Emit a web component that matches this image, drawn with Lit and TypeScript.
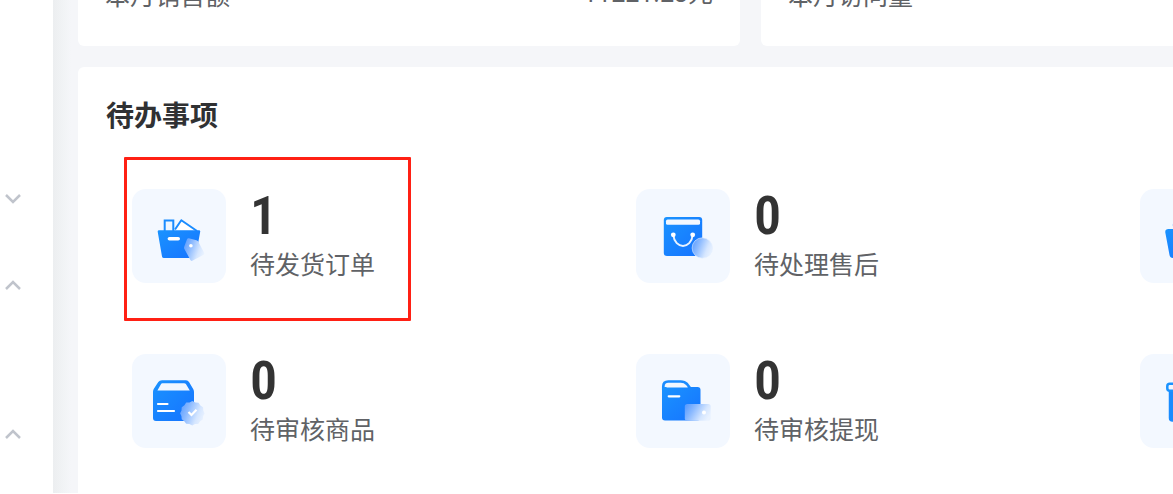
import { LitElement, html, css, svg, nothing } from "lit";
import { customElement, property } from "lit/decorators.js";

const gradients = svg`
  <defs>
    <linearGradient id="blue" x1="0" y1="0" x2="1" y2="1">
      <stop offset="0" stop-color="#1a93ff" />
      <stop offset="1" stop-color="#1673ff" />
    </linearGradient>
    <linearGradient id="glass" x1="0" y1="0.2" x2="1" y2="0.6">
      <stop offset="0" stop-color="#5c9dff" />
      <stop offset="0.35" stop-color="#8fbcff" />
      <stop offset="0.75" stop-color="#d5e6ff" />
      <stop offset="1" stop-color="#e9f2ff" />
    </linearGradient>
  </defs>`;

const icons = {
  basket: svg`
    <path d="M32.7 43V31.6h8.6V43" fill="#eef6ff" stroke="#1a8cff" stroke-width="2" />
    <path d="M43 40.5l6.3-9.3L65 42" fill="#fff" stroke="#1a8cff" stroke-width="2" stroke-linejoin="round" />
    <path d="M27 41.3h40q1.5 0 1.2 1.5l-4.5 24.4q-.4 1.8-2 1.8H32q-1.7 0-2-1.6L25.7 42.8q-.2-1.5 1.3-1.5z" fill="url(#blue)" />
    <rect x="35.6" y="48" width="12.4" height="3.6" rx="1.8" fill="#fff" />
    <path d="M56.8 49.2l7.6 2q1.2.4 1.8 1.4l5.8 11q.8 1.6-.8 2.4l-10.4 5.6q-1.6.8-2.4-.6l-6-11q-.6-1 -.2-2.2l2.8-7.6q.5-1.2 1.8-1z" fill="url(#glass)" />
    <circle cx="58.9" cy="56.7" r="1.8" fill="#fff" />`,
  bag: svg`
    <rect x="27.8" y="28" width="38.4" height="39" rx="3" fill="url(#blue)" />
    <rect x="30" y="30.6" width="34" height="5.2" rx="1.6" fill="#f3f8ff" />
    <path d="M37.3 46c1.5 14.5 17.9 14.5 19.4 0" fill="none" stroke="#e8f2ff" stroke-width="2" />
    <circle cx="37.3" cy="45.8" r="2.4" fill="#fff" />
    <circle cx="56.7" cy="45.8" r="2.4" fill="#fff" />
    <circle cx="66.3" cy="59" r="10.2" fill="url(#glass)" stroke="#e3efff" stroke-width="0.6" />`,
  box: svg`
    <path d="M30 26.3h24q2 0 3 1.8l4.2 7q.8 1.4.8 3V64q0 3-3 3H24q-3 0-3-3V38q0-1.5.7-3l4.6-6.9q1.2-1.8 3.7-1.8z" fill="url(#blue)" />
    <path d="M30.4 29.3H52q1.5 0 2.2 1.3l3.6 6H25.4l3.4-6q.6-1.3 1.6-1.3z" fill="#f1f7ff" />
    <path d="M26 50h9.5M26 57h16" stroke="#fff" stroke-width="2.2" stroke-linecap="round" />
    <path d="M60.3 47l3 1.5 3.3.2 1.8 2.7 2.7 1.9.2 3.2 1.3 2.9-1.5 2.9-.3 3.2-2.7 1.8-1.9 2.6-3.2.2-2.7 1.4-2.9-1.4-3.2-.3-1.9-2.6-2.6-1.9-.3-3.2-1.3-2.8 1.4-2.9.2-3.2 2.7-1.9 1.8-2.7 3.3-.2z" fill="url(#glass)" />
    <path d="M56.5 58l3 3 5-5.2" fill="none" stroke="#fff" stroke-width="2.2" />`,
  wallet: svg`
    <path d="M27.3 36v-3.5q0-5 5-5h12.4q4 0 6.3 2.5l3 4" fill="#f1f7ff" stroke="#1a8cff" stroke-width="2.7" />
    <path d="M29 33h32.5q3 0 3 3v27.5q0 3-3 3H29q-3 0-3-3V36q0-3 3-3z" fill="url(#blue)" />
    <path d="M30.5 33.6q0-2.6 2.6-2.6h15.5l3.4 2.6z" fill="#f1f7ff" />
    <path d="M32.7 42.3h10.6" stroke="#fff" stroke-width="2.2" stroke-linecap="round" />
    <rect x="48.8" y="50" width="25.9" height="16.7" rx="2.5" fill="url(#glass)" />
    <circle cx="68" cy="58.5" r="2" fill="#fff" />`,
  refund: svg`
    <circle cx="34" cy="36" r="1.5" fill="#a5cdff" />
    <path d="M28.5 40h37q3.5 0 3 3.5l-4 22.5q-.5 3-3.5 3H33q-3 0-3.5-3l-4.2-22.5q-.4-3.5 3.2-3.5z" fill="url(#blue)" />`,
  store: svg`
    <path d="M30 37v27q0 2.5 2.5 2.5h30q2.5 0 2.5-2.5V37" fill="#1a8cff" stroke="#1a8cff" stroke-width="2.5" />
    <rect x="27.3" y="29.7" width="40" height="7" rx="2.5" fill="#f1f7ff" stroke="#1a93ff" stroke-width="2.5" />`,
};

type IconName = keyof typeof icons;

@customElement("todo-item")
class TodoItem extends LitElement {
  @property() icon: IconName = "basket";
  @property() label = "";
  @property() count = "";
  @property({ type: Boolean }) marked = false;

  static styles = css`
    :host {
      display: flex;
      gap: 24px;
      position: relative;
    }
    .tile {
      flex: none;
      width: 94px;
      height: 94px;
      border-radius: 14px;
      background: #f3f8ff;
    }
    .tile svg {
      display: block;
    }
    .text {
      display: flex;
      flex-direction: column;
      white-space: nowrap;
    }
    .count {
      font: 600 54px/54px "Roboto Condensed", "Open Sans Condensed", "Noto Sans Condensed", "Roboto", sans-serif;
      color: #333;
    }
    .label {
      font-size: 25px;
      line-height: 40px;
      color: #606266;
    }
    .mark {
      position: absolute;
      left: -8px;
      top: -32px;
      box-sizing: border-box;
      width: 287px;
      height: 164px;
      border: 3px solid #ff2014;
      border-radius: 1px;
      pointer-events: none;
    }
  `;

  render() {
    return html`
      <div class="tile">
        <svg width="94" height="94" viewBox="0 0 94 94" aria-hidden="true">${gradients}${icons[this.icon]}</svg>
      </div>
      ${this.label
        ? html`<div class="text">
            <span class="count">${this.count}</span>
            <span class="label">${this.label}</span>
          </div>`
        : nothing}
      ${this.marked ? html`<div class="mark"></div>` : nothing}
    `;
  }
}

@customElement("app-root")
class AppRoot extends LitElement {
  static styles = css`
    :host {
      display: flex;
      height: 100vh;
      overflow: hidden;
      background: #fff;
      font-family: "Noto Sans CJK SC", sans-serif;
      color: #606266;
    }
    .sidebar {
      flex: none;
      width: 53px;
      padding-top: 156px;
      box-sizing: border-box;
    }
    .group {
      display: flex;
      align-items: center;
      width: 100%;
      height: 86px;
      padding: 0 0 0 4px;
      border: 0;
      background: none;
    }
    .submenu {
      height: 63px;
    }
    .main {
      flex: 1;
      min-width: 0;
      overflow: hidden;
      margin-bottom: 1px;
      padding-left: 25px;
      display: flex;
      flex-direction: column;
      gap: 21px;
      background: linear-gradient(90deg, #eceef0, #f1f3f5 10px, #f5f6f9 18px);
    }
    .stats {
      flex: none;
      display: grid;
      grid-template-rows: 46px;
      grid-auto-flow: column;
      grid-auto-columns: 662px;
      gap: 21px;
    }
    .stat {
      box-sizing: border-box;
      height: 46px;
      display: flex;
      justify-content: space-between;
      align-items: flex-end;
      padding: 0 27px 33px;
      background: #fff;
      border-radius: 0 0 6px 6px;
      font-size: 25px;
      line-height: 38px;
      white-space: nowrap;
    }
    .amount {
      font-family: "Roboto", "Noto Sans CJK SC", sans-serif;
    }
    .panel {
      flex: 1;
      padding: 27px 28px;
      background: #fff;
      border-radius: 6px 0 0 0;
    }
    .title {
      margin: 0;
      font-size: 28px;
      line-height: 40px;
      font-weight: 700;
      color: #303133;
    }
    .todos {
      display: grid;
      grid-template-columns: repeat(3, 504px);
      gap: 71px 0;
      padding: 55px 26px 0;
    }
  `;

  private chevron(open: boolean) {
    return html`
      <button class="group" aria-label=${open ? "收起" : "展开"} aria-expanded=${open ? "true" : "false"}>
        <svg width="18" height="12" viewBox="0 0 18 12" fill="none" stroke="#c0c4cc" stroke-width="2.5">
          <path d=${open ? "M2 10l7-7 7 7" : "M2 2l7 7 7-7"} />
        </svg>
      </button>`;
  }

  render() {
    return html`
      <nav class="sidebar">
        ${this.chevron(false)}${this.chevron(true)}
        <div class="submenu"></div>
        ${this.chevron(true)}
      </nav>
      <main class="main">
        <section class="stats">
          <div class="stat"><span>本月销售额</span><span class="amount">11221.23元</span></div>
          <div class="stat"><span>本月访问量</span></div>
        </section>
        <section class="panel">
          <h2 class="title">待办事项</h2>
          <div class="todos">
            <todo-item icon="basket" count="1" label="待发货订单" marked></todo-item>
            <todo-item icon="bag" count="0" label="待处理售后"></todo-item>
            <todo-item icon="refund"></todo-item>
            <todo-item icon="box" count="0" label="待审核商品"></todo-item>
            <todo-item icon="wallet" count="0" label="待审核提现"></todo-item>
            <todo-item icon="store"></todo-item>
          </div>
        </section>
      </main>
    `;
  }
}
